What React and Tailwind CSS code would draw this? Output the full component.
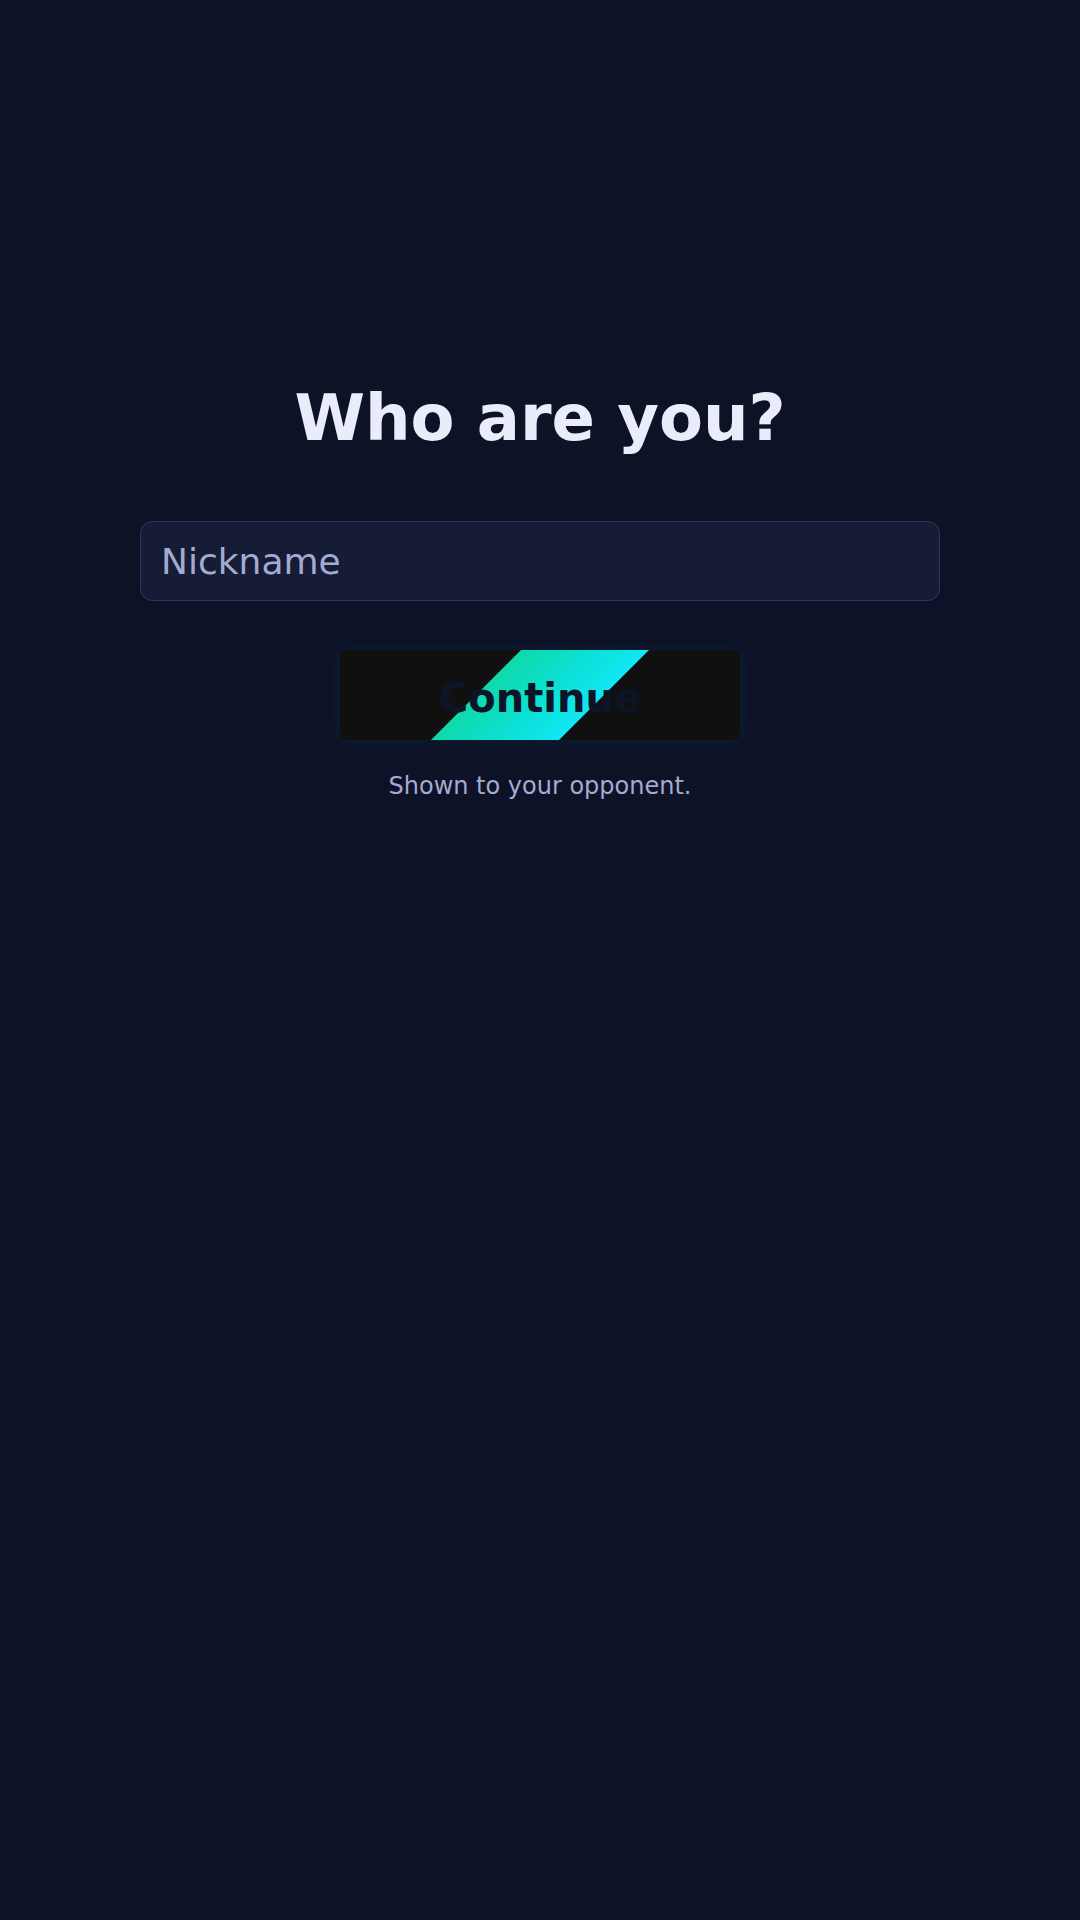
import { useState } from 'react';

export default function App() {
  const [name, setName] = useState('');

  return (
    <div
      className="min-h-screen w-full bg-[#0d1227] flex flex-col items-center pt-[386px]"
      style={{ fontFamily: '"DejaVu Sans", "Liberation Sans", sans-serif' }}
    >
      <h1 className="text-[64px] leading-none font-bold text-[#e9edfb]">Who are you?</h1>

      <input
        value={name}
        onChange={(e) => setName(e.target.value)}
        placeholder="Nickname"
        className="mt-[71px] w-[800px] h-[80px] rounded-xl border border-[#2b3560] bg-[#161b36] px-5 text-[36px] text-[#e9edfb] placeholder:text-[#a3acd0] outline-none"
      />

      <button className="relative mt-[49px] w-[400px] h-[90px] overflow-hidden bg-[#101010] shadow-[0_0_14px_rgba(20,200,220,0.08)]">
        {/* diagonal shine strip */}
        <span className="absolute inset-y-0 left-1/2 -ml-[64px] w-[128px] -skew-x-[45deg] bg-gradient-to-r from-[#10d9a8] to-[#12e6f6]" />
        <span className="relative top-[3px] text-[40px] font-bold text-[#0c1428]">Continue</span>
      </button>

      <p className="mt-[34px] text-[24px] leading-none text-[#a3acd0]">Shown to your opponent.</p>
    </div>
  );
}
